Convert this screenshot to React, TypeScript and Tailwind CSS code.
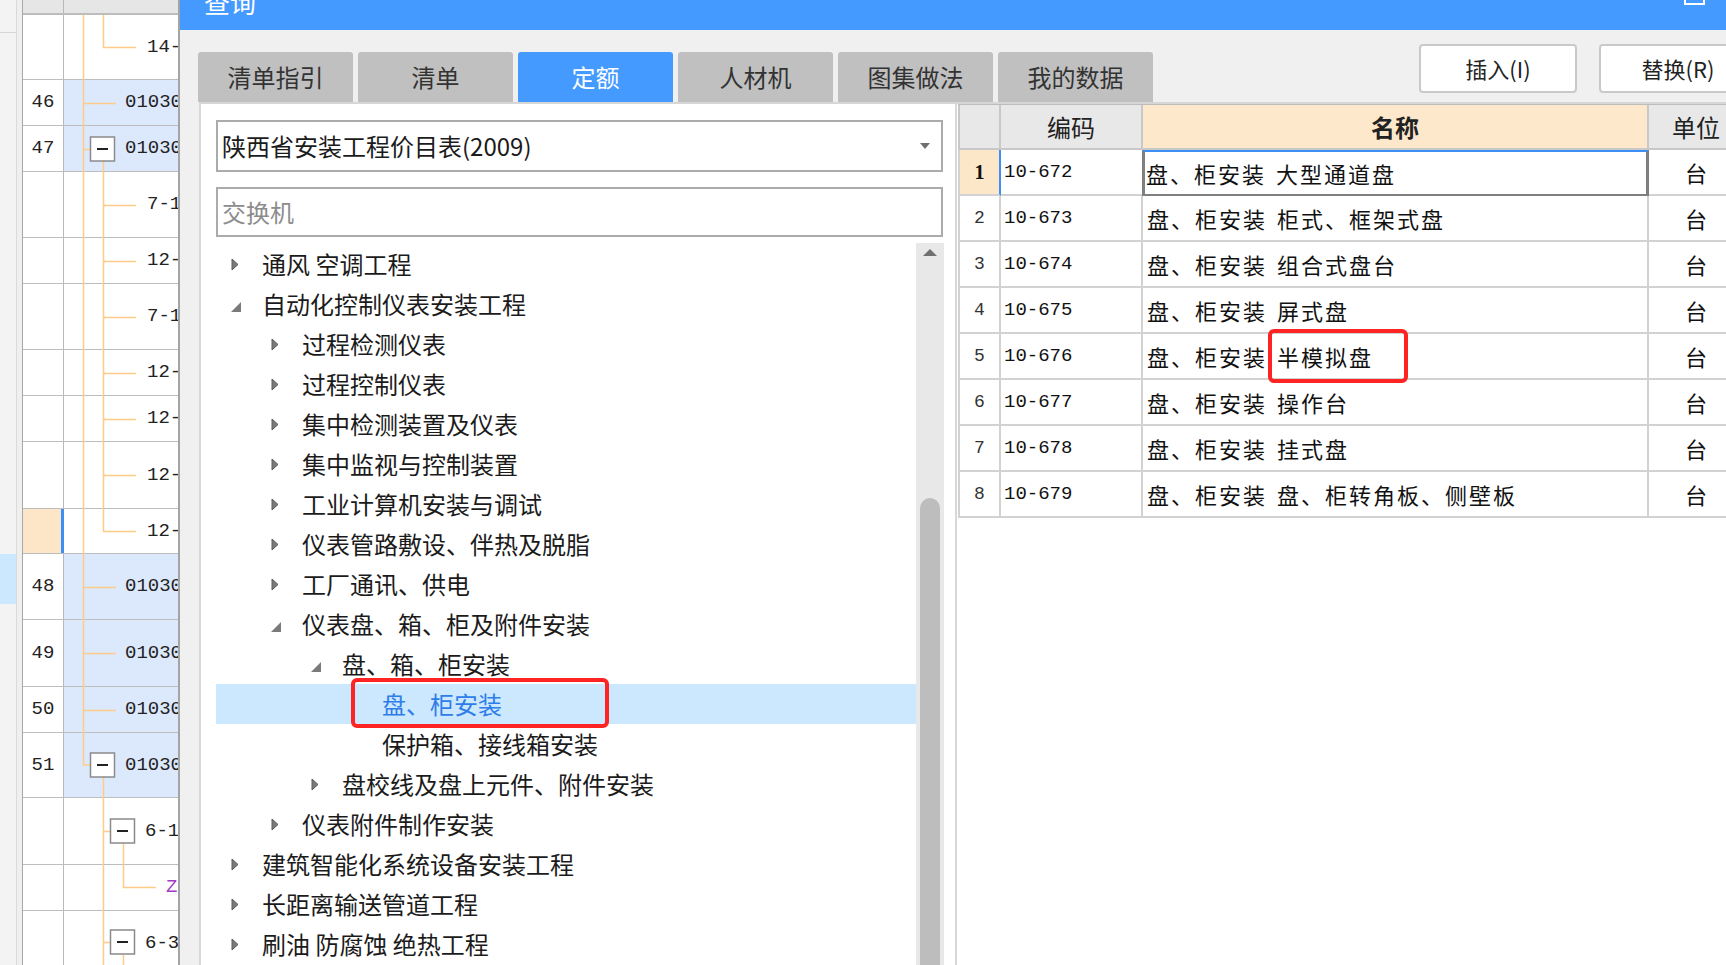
import React from "react";

const MONO = "font-['Liberation_Mono',monospace]";
const CJK = "font-['Noto_Sans_CJK_SC','Noto_Sans',sans-serif]";

type GridRow = { h: string; num?: string; text: string; pl: string; hl?: boolean; mark?: boolean; purple?: boolean };

const gridRows: GridRow[] = [
  { h: "h-[65px]", text: "14-", pl: "pl-[83px]" },
  { h: "h-[46px]", num: "46", text: "01030", pl: "pl-[61px]", hl: true },
  { h: "h-[46px]", num: "47", text: "01030", pl: "pl-[61px]", hl: true },
  { h: "h-[66px]", text: "7-1", pl: "pl-[83px]" },
  { h: "h-[46px]", text: "12-", pl: "pl-[83px]" },
  { h: "h-[66px]", text: "7-1", pl: "pl-[83px]" },
  { h: "h-[46px]", text: "12-", pl: "pl-[83px]" },
  { h: "h-[46px]", text: "12-", pl: "pl-[83px]" },
  { h: "h-[67px]", text: "12-", pl: "pl-[83px]" },
  { h: "h-[45px]", text: "12-", pl: "pl-[83px]", mark: true },
  { h: "h-[66px]", num: "48", text: "01030", pl: "pl-[61px]", hl: true },
  { h: "h-[67px]", num: "49", text: "01030", pl: "pl-[61px]", hl: true },
  { h: "h-[46px]", num: "50", text: "01030", pl: "pl-[61px]", hl: true },
  { h: "h-[65px]", num: "51", text: "01030", pl: "pl-[61px]", hl: true },
  { h: "h-[67px]", text: "6-1", pl: "pl-[81px]" },
  { h: "h-[46px]", text: "Z", pl: "pl-[102px]", purple: true },
  { h: "h-[66px]", text: "6-3", pl: "pl-[81px]" },
];

function Expander({ x, cy }: { x: number; cy: number }) {
  return (
    <g>
      <rect x={x + 0.5} y={cy - 12} width={24} height={24} fill="#fff" stroke="#8a8a8a" strokeWidth={1.5} />
      <line x1={x + 7} y1={cy} x2={x + 18} y2={cy} stroke="#222" strokeWidth={2} />
    </g>
  );
}

function TreeLines() {
  const c = "#ffcb88";
  return (
    <svg className="absolute left-0 top-0 pointer-events-none" width={155} height={965} viewBox="23 0 155 965">
      <g stroke={c} strokeWidth={1.5} fill="none">
        <path d="M83.5 15 V765 H90" />
        {[103, 587, 653, 710].map((y) => (
          <path key={y} d={`M83 ${y + 0.5} H116`} />
        ))}
        <path d="M83 149.5 H90" />
        <path d="M103.5 15 V47.5 H136" />
        <path d="M103.5 161 V531.5 H136" />
        {[205, 261, 317, 373, 419, 475].map((y) => (
          <path key={y} d={`M103 ${y + 0.5} H136`} />
        ))}
        <path d="M103.5 777 V965" />
        <path d="M103 831.5 H110" />
        <path d="M103 942.5 H110" />
        <path d="M123.5 843 V887.5 H156" />
        <path d="M123.5 955 V965" />
      </g>
      <Expander x={90} cy={149} />
      <Expander x={90} cy={765} />
      <Expander x={110} cy={831} />
      <Expander x={110} cy={942} />
    </svg>
  );
}

function LeftGrid() {
  return (
    <div className="flex h-full w-[180px] shrink-0 border-r-2 border-[#a4a4a4]">
      <div className="w-[17px] shrink-0 h-full bg-[#f3f3f3] border-r border-[#dadada] flex flex-col">
        <div className="h-[33px] border-b border-[#d6d6d6]" />
        <div className="h-[521px]" />
        <div className="h-[50px] bg-[#cce8ff]" />
      </div>
      <div className="w-[6px] shrink-0 h-full bg-[#efefef] border-r border-[#a8a8a8]" />
      <div className={`relative flex-1 min-w-0 flex flex-col ${MONO} text-[19px] text-[#222]`}>
        <div className="h-[15px] shrink-0 flex border-b-2 border-[#bdbdbd] bg-[#e6e6e6]">
          <div className="w-[41px] border-r border-[#b8b8b8]" />
        </div>
        {gridRows.map((r, i) => (
          <div key={i} className={`flex shrink-0 border-b border-[#bdbdbd] ${r.h}`}>
            <div
              className={`w-[41px] shrink-0 flex items-center justify-center ${
                r.mark ? "bg-[#fde6c8] border-r-[3px] border-[#3d8ef5]" : "bg-white border-r border-[#b8b8b8]"
              }`}
            >
              {r.num}
            </div>
            <div
              className={`flex-1 min-w-0 flex items-center overflow-hidden whitespace-nowrap ${r.pl} ${
                r.hl ? "bg-[#dce9fc]" : "bg-white"
              } ${r.purple ? "text-[#a23cc4]" : ""}`}
            >
              {r.text}
            </div>
          </div>
        ))}
        <TreeLines />
      </div>
    </div>
  );
}

type Node = { t: string; lv: number; st: "c" | "e" | "l"; sel?: boolean };

const nodes: Node[] = [
  { t: "通风 空调工程", lv: 0, st: "c" },
  { t: "自动化控制仪表安装工程", lv: 0, st: "e" },
  { t: "过程检测仪表", lv: 1, st: "c" },
  { t: "过程控制仪表", lv: 1, st: "c" },
  { t: "集中检测装置及仪表", lv: 1, st: "c" },
  { t: "集中监视与控制装置", lv: 1, st: "c" },
  { t: "工业计算机安装与调试", lv: 1, st: "c" },
  { t: "仪表管路敷设、伴热及脱脂", lv: 1, st: "c" },
  { t: "工厂通讯、供电", lv: 1, st: "c" },
  { t: "仪表盘、箱、柜及附件安装", lv: 1, st: "e" },
  { t: "盘、箱、柜安装", lv: 2, st: "e" },
  { t: "盘、柜安装", lv: 3, st: "l", sel: true },
  { t: "保护箱、接线箱安装", lv: 3, st: "l" },
  { t: "盘校线及盘上元件、附件安装", lv: 2, st: "c" },
  { t: "仪表附件制作安装", lv: 1, st: "c" },
  { t: "建筑智能化系统设备安装工程", lv: 0, st: "c" },
  { t: "长距离输送管道工程", lv: 0, st: "c" },
  { t: "刷油 防腐蚀 绝热工程", lv: 0, st: "c" },
];

const LEVEL_PL = ["pl-[12px]", "pl-[52px]", "pl-[92px]", "pl-[132px]"];

function Arrow({ st }: { st: Node["st"] }) {
  if (st === "c")
    return (
      <svg width="8" height="13" viewBox="0 0 8 13">
        <path d="M1 1 L7 6.5 L1 12 Z" fill="#7a7a7a" stroke="#5a5a5a" strokeWidth={1} />
      </svg>
    );
  if (st === "e")
    return (
      <svg width="10" height="10" viewBox="0 0 10 10" className="mt-[6px]">
        <path d="M10 0 V10 H0 Z" fill="#7a7a7a" />
      </svg>
    );
  return null;
}

function TreePanel() {
  return (
    <div className="w-[758px] shrink-0 h-full bg-white border-x-2 border-[#d8d8d8] flex flex-col pt-[16px] pl-[15px]">
      <div className="w-[727px] h-[52px] shrink-0 border-2 border-[#ababab] flex items-center justify-between pl-[4px] pr-[11px] text-[24px] text-[#1b1b1b]">
        <span>陕西省安装工程价目表(2009)</span>
        <svg width="10" height="6" viewBox="0 0 10 6">
          <path d="M0 0 H10 L5 6 Z" fill="#707070" />
        </svg>
      </div>
      <div className="mt-[15px] w-[727px] h-[50px] shrink-0 border-2 border-[#ababab] flex items-center pl-[4px] text-[24px] text-[#8c8c8c]">
        交换机
      </div>
      <div className="mt-[3px] flex-1 flex min-h-0">
        <div className="w-[700px] pt-[4px] flex flex-col text-[24px]">
          {nodes.map((n, i) => (
            <div
              key={i}
              className={`relative h-[40px] shrink-0 flex items-center whitespace-nowrap ${LEVEL_PL[n.lv]} ${
                n.sel ? "bg-[#cce8ff]" : ""
              }`}
            >
              <span className="w-[34px] shrink-0 pl-[3px] flex items-center">
                <Arrow st={n.st} />
              </span>
              <span className={n.sel ? "text-[#2e7de9]" : "text-[#1b1b1b]"}>{n.t}</span>
              {n.sel && (
                <span className="absolute z-10 left-[135px] -top-[6px] w-[258px] h-[50px] border-[4px] border-[#ff2424] rounded-[6px]" />
              )}
            </div>
          ))}
        </div>
        <div className="w-[28px] mt-[3px] bg-[#e8e8e8] flex flex-col items-center">
          <svg width="14" height="7" viewBox="0 0 14 7" className="mt-[6px]">
            <path d="M0 7 L7 0 L14 7 Z" fill="#707070" />
          </svg>
          <div className="mt-[242px] w-[20px] flex-1 bg-[#bdbdbd] rounded-t-[10px]" />
        </div>
      </div>
    </div>
  );
}

const rows = [
  ["10-672", "盘、柜安装", "大型通道盘"],
  ["10-673", "盘、柜安装", "柜式、框架式盘"],
  ["10-674", "盘、柜安装", "组合式盘台"],
  ["10-675", "盘、柜安装", "屏式盘"],
  ["10-676", "盘、柜安装", "半模拟盘"],
  ["10-677", "盘、柜安装", "操作台"],
  ["10-678", "盘、柜安装", "挂式盘"],
  ["10-679", "盘、柜安装", "盘、柜转角板、侧壁板"],
];

function ResultTable() {
  return (
    <div className="flex-1 min-w-0 h-full bg-white pl-[1px] overflow-hidden">
      <div className="w-[785px] border-t border-[#bdbdbd]">
        <div className="flex h-[45px] text-[24px] text-[#222]">
          <div className="w-[43px] border-l-2 border-r-2 border-b-2 border-[#c8c8c8] bg-[#e8e8e8]" />
          <div className="w-[142px] border-r-2 border-b-2 border-[#c8c8c8] bg-[#e8e8e8] flex items-center justify-center">
            编码
          </div>
          <div className="w-[506px] border-r-2 border-b-2 border-[#c8c8c8] bg-[#fde8cb] flex items-center justify-center font-bold">
            名称
          </div>
          <div className="w-[94px] border-b-2 border-[#c8c8c8] bg-[#e8e8e8] flex items-center justify-center">
            单位
          </div>
        </div>
        {rows.map((r, i) => {
          const first = i === 0;
          return (
            <div key={i} className="flex h-[46px] text-[#111]">
              <div
                className={`w-[43px] border-l-2 border-r-2 border-b-2 border-[#d2d2d2] flex items-center justify-center ${
                  first
                    ? "bg-[#fde7c9] border-r-[#3d8ef5] font-['Liberation_Serif',serif] font-bold text-[20px]"
                    : `${MONO} text-[18px] text-[#333]`
                }`}
              >
                {i + 1}
              </div>
              <div
                className={`${first ? "w-[141px]" : "w-[142px] border-r-2"} border-b-2 border-[#d2d2d2] flex items-center pl-[3px] ${MONO} text-[19px]`}
              >
                {r[0]}
              </div>
              <div
                className={`relative flex items-center whitespace-nowrap text-[22px] tracking-[2px] ${
                  first
                    ? "w-[507px] border-l-[3px] border-r-[3px] border-b-2 border-t-2 border-[#7f7f7f] border-t-[#3d8ef5] pl-[1px]"
                    : "w-[506px] border-r-2 border-b-2 border-[#d2d2d2] pl-[4px]"
                }`}
              >
                <span>{r[1]}</span>
                <span className="ml-[10px]">{r[2]}</span>
                {i === 4 && (
                  <span className="absolute left-[125px] -top-[5px] w-[140px] h-[54px] border-[4px] border-[#ff2424] rounded-[6px]" />
                )}
              </div>
              <div className="w-[94px] border-b-2 border-[#d2d2d2] flex items-center justify-center text-[22px]">台</div>
            </div>
          );
        })}
      </div>
    </div>
  );
}

const tabs = ["清单指引", "清单", "定额", "人材机", "图集做法", "我的数据"];

function QueryDialog() {
  return (
    <div className="flex-1 min-w-0 h-full flex flex-col bg-[#f0f0f0]">
      <div className="h-[30px] shrink-0 bg-[#449aff] flex items-start overflow-hidden">
        <span className="pl-[24px] -mt-[13px] text-[26px] leading-[30px] text-white">查询</span>
        <span className="ml-auto mr-[21px] -mt-[11px] w-[21px] h-[16px] border-2 border-white" />
      </div>
      <div className="h-[72px] shrink-0 flex">
        <div className="self-end flex gap-[5px] pl-[18px]">
          {tabs.map((t) => (
            <div
              key={t}
              className={`w-[155px] h-[50px] rounded-t-[3px] flex items-center justify-center text-[24px] ${
                t === "定额" ? "bg-[#449aff] text-white" : "bg-[#c0c0c0] text-[#333]"
              }`}
            >
              {t}
            </div>
          ))}
        </div>
        <div className="flex gap-[22px] ml-[266px] mt-[14px] shrink-0">
          {["插入(I)", "替换(R)"].map((b) => (
            <div
              key={b}
              className="w-[158px] h-[49px] bg-white border-2 border-[#c9c9c9] rounded-[4px] flex items-center justify-center text-[22px] text-[#222]"
            >
              {b}
            </div>
          ))}
        </div>
      </div>
      <div className="flex-1 min-h-0 pl-[19px]">
        <div className="h-full flex border-t-2 border-[#d6d6d6]">
          <TreePanel />
          <ResultTable />
        </div>
      </div>
    </div>
  );
}

export default function App() {
  return (
    <div className={`w-[1726px] h-[965px] overflow-hidden flex bg-white ${CJK}`}>
      <LeftGrid />
      <QueryDialog />
    </div>
  );
}
